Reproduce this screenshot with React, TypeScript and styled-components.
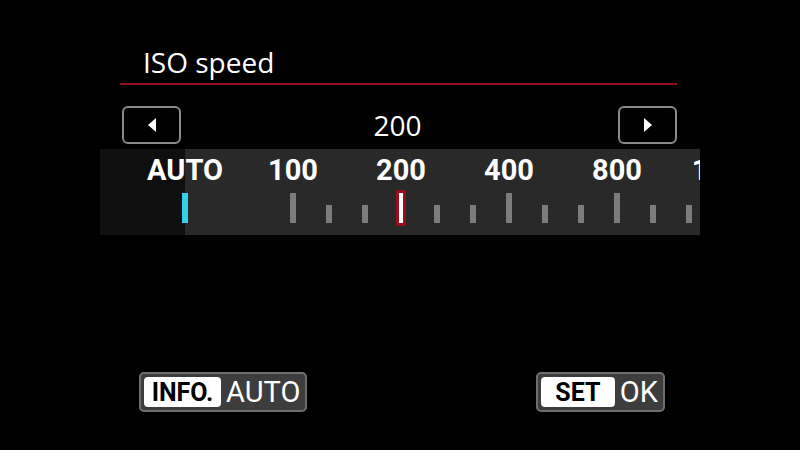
import React from 'react';
import styled, { createGlobalStyle } from 'styled-components';

const GlobalStyle = createGlobalStyle`
  html, body {
    margin: 0;
    padding: 0;
    background: #000;
  }
  body {
    font-family: "Open Sans", "Liberation Sans", sans-serif;
    color: #fff;
  }
`;

const Screen = styled.div`
  width: 800px;
  height: 450px;
  background: #000;
  display: flex;
  flex-direction: column;
  overflow: hidden;
`;

const Header = styled.div`
  margin: 0 123px 0 120px;
  padding: 42px 0 1px 23px;
  border-bottom: 2px solid #8e1020;
`;

const Title = styled.div`
  font-size: 28px;
  line-height: 40px;
  font-weight: 400;
`;

const Selector = styled.div`
  display: flex;
  align-items: center;
  justify-content: space-between;
  margin: 21px 123px 0 122px;
`;

const ArrowButton = styled.div`
  width: 55px;
  height: 34px;
  border: 2px solid #8a8a8a;
  border-radius: 6px;
  display: flex;
  align-items: center;
  justify-content: center;
`;

const Value = styled.div`
  font-size: 28px;
  line-height: 38px;
  margin-right: 4px;
`;

const Band = styled.div`
  margin: 5px 100px 0 100px;
  height: 86px;
  background: linear-gradient(to right, #0f0f0f 85px, #292929 85px);
  display: flex;
  padding-left: 67px;
  overflow: hidden;
`;

const Stop = styled.div`
  width: 36px;
  flex: 0 0 36px;
  display: flex;
  flex-direction: column;
  align-items: center;
`;

const Label = styled.div`
  font-family: Roboto, "Liberation Sans", sans-serif;
  font-weight: 700;
  font-size: 29px;
  line-height: 34px;
  height: 34px;
  margin-top: 4px;
  white-space: nowrap;
`;

const TickSlot = styled.div`
  flex: 1;
  display: flex;
  align-items: flex-end;
  justify-content: center;
  padding-bottom: 12px;
`;

const Tick = styled.div<{ $tall?: boolean; $auto?: boolean }>`
  width: 6px;
  height: ${({ $tall }) => ($tall ? 30 : 18)}px;
  background: ${({ $auto }) => ($auto ? '#35cfe8' : '#7c7c7c')};
`;

const SelectedTick = styled.div`
  width: 4px;
  height: 30px;
  background: #fff;
  border: 3px solid #9a0d1c;
  border-radius: 1px;
  margin-bottom: -3px;
`;

const Footer = styled.div`
  margin-top: auto;
  display: flex;
  justify-content: space-between;
  padding: 0 135px 38px 139px;
`;

const SoftKey = styled.div`
  height: 36px;
  display: flex;
  align-items: center;
  gap: 5px;
  padding: 0 5px 0 3px;
  background: #3d3d3d;
  border: 2px solid #6e6e6e;
  border-radius: 5px;
`;

const KeyCap = styled.div<{ $width: number }>`
  width: ${({ $width }) => $width}px;
  height: 30px;
  background: #fff;
  color: #000;
  border-radius: 4px;
  display: flex;
  align-items: center;
  justify-content: center;
  font-family: Roboto, "Liberation Sans", sans-serif;
  font-weight: 700;
  font-size: 25px;
`;

const KeyText = styled.div`
  font-family: Roboto, "Liberation Sans", sans-serif;
  font-size: 29px;
  line-height: 36px;
  color: #fff;
`;

type StopDef = { label?: string; kind: 'auto' | 'tall' | 'short' | 'none' | 'selected' };

const stops: StopDef[] = [
  { label: 'AUTO', kind: 'auto' },
  { kind: 'none' },
  { kind: 'none' },
  { label: '100', kind: 'tall' },
  { kind: 'short' },
  { kind: 'short' },
  { label: '200', kind: 'selected' },
  { kind: 'short' },
  { kind: 'short' },
  { label: '400', kind: 'tall' },
  { kind: 'short' },
  { kind: 'short' },
  { label: '800', kind: 'tall' },
  { kind: 'short' },
  { kind: 'short' },
  { label: '1600', kind: 'tall' },
];

const Triangle = ({ dir }: { dir: 'left' | 'right' }) => (
  <svg width="10" height="14" viewBox="0 0 10 14">
    <path d={dir === 'left' ? 'M9 0 L1 7 L9 14 Z' : 'M1 0 L9 7 L1 14 Z'} fill="#fff" />
  </svg>
);

export default function App() {
  return (
    <>
      <GlobalStyle />
      <Screen>
        <Header>
          <Title>ISO speed</Title>
        </Header>

        <Selector>
          <ArrowButton>
            <Triangle dir="left" />
          </ArrowButton>
          <Value>200</Value>
          <ArrowButton>
            <Triangle dir="right" />
          </ArrowButton>
        </Selector>

        <Band>
          {stops.map((s, i) => (
            <Stop key={i}>
              <Label>{s.label ?? ''}</Label>
              <TickSlot>
                {s.kind === 'auto' && <Tick $tall $auto />}
                {s.kind === 'tall' && <Tick $tall />}
                {s.kind === 'short' && <Tick />}
                {s.kind === 'selected' && <SelectedTick />}
              </TickSlot>
            </Stop>
          ))}
        </Band>

        <Footer>
          <SoftKey>
            <KeyCap $width={77}>INFO.</KeyCap>
            <KeyText>AUTO</KeyText>
          </SoftKey>
          <SoftKey>
            <KeyCap $width={74}>SET</KeyCap>
            <KeyText>OK</KeyText>
          </SoftKey>
        </Footer>
      </Screen>
    </>
  );
}
